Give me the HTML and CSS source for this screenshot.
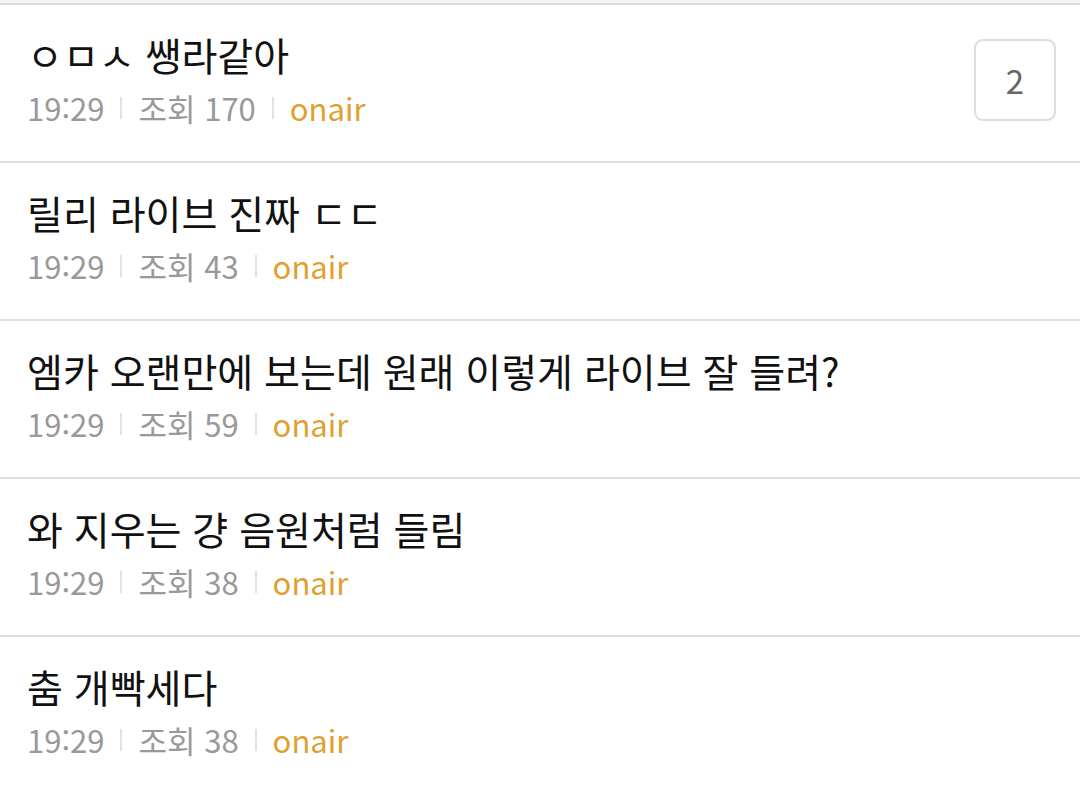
FILE: index.html
```html
<!DOCTYPE html>
<html lang="ko">
<head>
<meta charset="utf-8">
<link rel="stylesheet" href="styles.css">
</head>
<body>
<div class="topstrip"></div>
<ul class="list">
  <li class="item">
    <div class="body">
      <div class="title">ㅇㅁㅅ 쌩라같아</div>
      <div class="meta"><span>19:29</span><i class="bar"></i><span>조회 170</span><i class="bar"></i><span class="board">onair</span></div>
    </div>
    <div class="count">2</div>
  </li>
  <li class="item">
    <div class="body">
      <div class="title">릴리 라이브 진짜 ㄷㄷ</div>
      <div class="meta"><span>19:29</span><i class="bar"></i><span>조회 43</span><i class="bar"></i><span class="board">onair</span></div>
    </div>
  </li>
  <li class="item">
    <div class="body">
      <div class="title">엠카 오랜만에 보는데 원래 이렇게 라이브 잘 들려?</div>
      <div class="meta"><span>19:29</span><i class="bar"></i><span>조회 59</span><i class="bar"></i><span class="board">onair</span></div>
    </div>
  </li>
  <li class="item">
    <div class="body">
      <div class="title">와 지우는 걍 음원처럼 들림</div>
      <div class="meta"><span>19:29</span><i class="bar"></i><span>조회 38</span><i class="bar"></i><span class="board">onair</span></div>
    </div>
  </li>
  <li class="item">
    <div class="body">
      <div class="title">춤 개빡세다</div>
      <div class="meta"><span>19:29</span><i class="bar"></i><span>조회 38</span><i class="bar"></i><span class="board">onair</span></div>
    </div>
  </li>
</ul>
</body>
</html>
```
FILE: styles.css
```css
html, body {
  margin: 0;
  padding: 0;
  background: #fff;
  font-family: "Noto Sans CJK KR", "Noto Sans", sans-serif;
}
.topstrip {
  height: 3px;
  background: #f4f4f4;
}
.list {
  list-style: none;
  margin: 0;
  padding: 0;
  border-top: 2px solid #dddddd;
}
.item {
  display: flex;
  align-items: center;
  height: 158px;
  box-sizing: border-box;
  border-bottom: 2px solid #dddddd;
  padding: 0 24px 6px 27px;
}
.body {
  flex: 1;
  min-width: 0;
}
.title {
  font-size: 39px;
  line-height: 52px;
  margin-top: -2px;
  color: #111;
  white-space: nowrap;
}
.meta {
  display: flex;
  align-items: center;
  margin-top: 6px;
  font-size: 31px;
  line-height: 44px;
  color: #999;
}
.bar {
  display: block;
  width: 2px;
  height: 22px;
  background: #e2e2e2;
  margin: 0 16px;
}
.board {
  color: #e0a030;
}
.count {
  width: 82px;
  height: 82px;
  box-sizing: border-box;
  border: 2px solid #dcdcdc;
  border-radius: 9px;
  display: flex;
  align-items: center;
  justify-content: center;
  font-size: 33px;
  color: #666;
}
```
